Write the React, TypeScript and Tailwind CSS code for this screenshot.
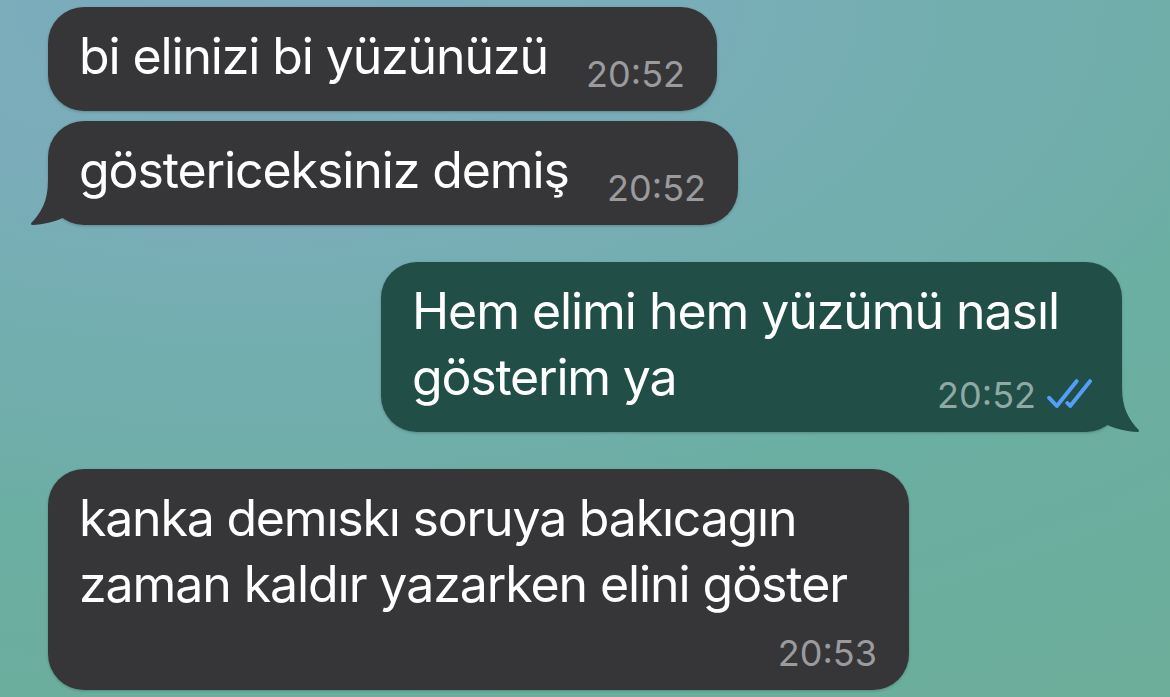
import clsx from "clsx";

type Line = { text: string; tracking: string };

type Message = {
  id: number;
  lines: Line[];
  time: string;
  mine?: boolean;
  tail?: boolean;
  size: string;
};

const messages: Message[] = [
  {
    id: 1,
    lines: [{ text: "bi elinizi bi yüzünüzü", tracking: "tracking-[-1.12px]" }],
    time: "20:52",
    size: "w-[669px] h-[104px]",
  },
  {
    id: 2,
    lines: [{ text: "göstericeksiniz demiş", tracking: "tracking-[-1.1px]" }],
    time: "20:52",
    tail: true,
    size: "w-[690px] h-[104px] mt-[10px]",
  },
  {
    id: 3,
    lines: [
      { text: "Hem elimi hem yüzümü nasıl", tracking: "tracking-[-1.06px]" },
      { text: "gösterim ya", tracking: "tracking-[-1.2px]" },
    ],
    time: "20:52",
    mine: true,
    tail: true,
    size: "w-[741px] h-[170px] mt-[37px]",
  },
  {
    id: 4,
    lines: [
      { text: "kanka demıskı soruya bakıcagın", tracking: "tracking-[-1.2px]" },
      { text: "zaman kaldır yazarken elini göster", tracking: "tracking-[-1.08px]" },
    ],
    time: "20:53",
    size: "w-[861px] h-[221px] mt-[37px]",
  },
];

function ReadTicks() {
  return (
    <svg
      width="46"
      height="32"
      viewBox="0 0 46 32"
      fill="none"
      stroke="#549df8"
      strokeWidth="4"
      strokeLinecap="round"
      strokeLinejoin="round"
      aria-hidden
    >
      <path d="M2.2 18.8 L9.8 27 L29.6 2.2" />
      <path d="M20.4 24 L23.2 27 L43 2.2" />
    </svg>
  );
}

function Tail({ mine }: { mine?: boolean }) {
  return (
    <svg
      width="54"
      height="60"
      viewBox="0 0 54 60"
      className={clsx(
        "absolute bottom-0",
        mine ? "right-[-18px] -scale-x-100 fill-[#214e47]" : "left-[-18px] fill-[#363638]"
      )}
      aria-hidden
    >
      <path d="M18 0 V16 C18 36 11 48 1.2 58 Q0.4 60 2.2 60 C14 59.5 24 57 32.5 53 L54 40 V0 Z" />
    </svg>
  );
}

function Bubble({ message }: { message: Message }) {
  const { lines, time, mine, tail, size } = message;
  return (
    <article
      className={clsx(
        "relative flex shrink-0 justify-between rounded-[36px] pt-[16px] pb-[15px] pl-[31px] shadow-[0_1px_3px_rgba(0,0,0,0.22)]",
        mine ? "self-end bg-[#214e47] pr-[29px]" : "self-start bg-[#363638] pr-[32px]",
        size
      )}
    >
      {tail && <Tail mine={mine} />}
      <p className="relative w-0 text-[50px] leading-[66px] text-white">
        {lines.map((line) => (
          <span key={line.text} className={clsx("block whitespace-pre", line.tracking)}>
            {line.text}
          </span>
        ))}
      </p>
      <div
        className={clsx(
          "relative flex items-center gap-[11px] self-end text-[36px] leading-[44px]",
          mine ? "text-[#8fa9a4]" : "text-[#9b9b9d]"
        )}
      >
        <time>{time}</time>
        {mine && <ReadTicks />}
      </div>
    </article>
  );
}

function App() {
  return (
    <main className="flex h-[697px] w-[1170px] flex-col overflow-hidden bg-[radial-gradient(ellipse_1670px_835px_at_250px_0px,#7dabbd_0%,#79adb8_27%,#73aeaf_42%,#70aeaa_55%,#6bafa3_63%,#6bae9f_78%,#6cae99_100%)] px-[48px] pt-[7px] font-['Inter',sans-serif]">
      {messages.map((message) => (
        <Bubble key={message.id} message={message} />
      ))}
    </main>
  );
}

export default App;
